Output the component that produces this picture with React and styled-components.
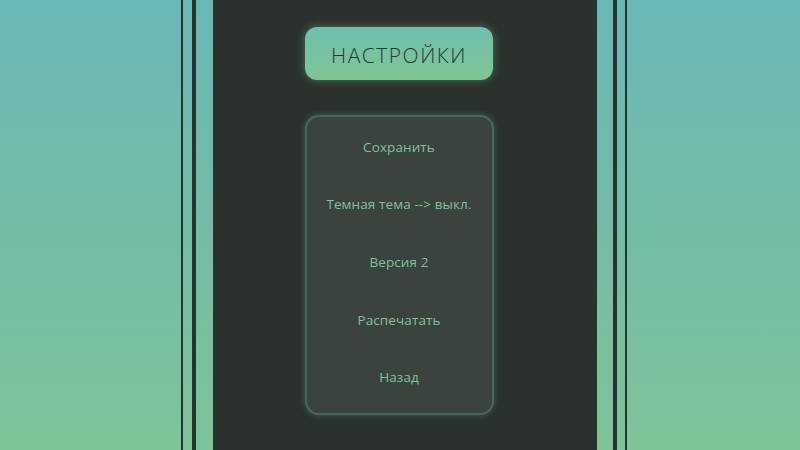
import React from "react";
import styled, { createGlobalStyle } from "styled-components";

const Global = createGlobalStyle`
  html, body { margin: 0; padding: 0; height: 100%; }
  body {
    background: linear-gradient(180deg, #68b8b7 0%, #72bca8 45%, #7dc498 100%);
    font-family: "Open Sans", "Noto Sans", sans-serif;
    overflow: hidden;
  }
  #root { height: 100%; }
`;

const Stage = styled.div`
  height: 450px;
  display: flex;
  align-items: stretch;
`;

const OuterFrame = styled.div`
  margin-left: 181px;
  display: flex;
  border-left: 2px solid #2b312d;
  border-right: 2px solid #2b312d;
  padding: 0 8px 0 9px;
`;

const InnerFrame = styled.div`
  display: flex;
  border-left: 4px solid #2b312d;
  border-right: 4px solid #2b312d;
  padding: 0 16px 0 17px;
`;

const Panel = styled.div`
  width: 384px;
  background: #2b312d;
  display: flex;
  flex-direction: column;
  align-items: center;
  padding: 27px 12px 0 0;
  box-sizing: border-box;
`;

const TitleButton = styled.div`
  width: 188px;
  height: 53px;
  border-radius: 12px;
  background: linear-gradient(180deg, #6fbfae 0%, #7ec595 100%);
  box-shadow: 0 0 8px rgba(125, 200, 150, 0.45);
  display: flex;
  align-items: center;
  justify-content: center;
  color: #2e3833;
  font-size: 21px;
  font-weight: 300;
  letter-spacing: 1.5px;
  padding-top: 2px;
  box-sizing: border-box;
`;

const Card = styled.div`
  margin-top: 35px;
  width: 189px;
  height: 300px;
  box-sizing: border-box;
  border: 2px solid #46695a;
  border-radius: 14px;
  background: #3a433e;
  box-shadow: 0 0 6px rgba(110, 185, 140, 0.35);
  display: flex;
  flex-direction: column;
  padding-top: 1px;
`;

const Item = styled.div`
  height: 57.6px;
  display: flex;
  align-items: center;
  justify-content: center;
  color: #7fc29b;
  font-size: 13.5px;
  letter-spacing: 0.1px;
  white-space: nowrap;
`;

const items = ["Сохранить", "Темная тема --> выкл.", "Версия 2", "Распечатать", "Назад"];

export default function App() {
  return (
    <>
      <Global />
      <Stage>
        <OuterFrame>
          <InnerFrame>
            <Panel>
              <TitleButton>НАСТРОЙКИ</TitleButton>
              <Card>
                {items.map((t) => (
                  <Item key={t}>{t}</Item>
                ))}
              </Card>
            </Panel>
          </InnerFrame>
        </OuterFrame>
      </Stage>
    </>
  );
}
